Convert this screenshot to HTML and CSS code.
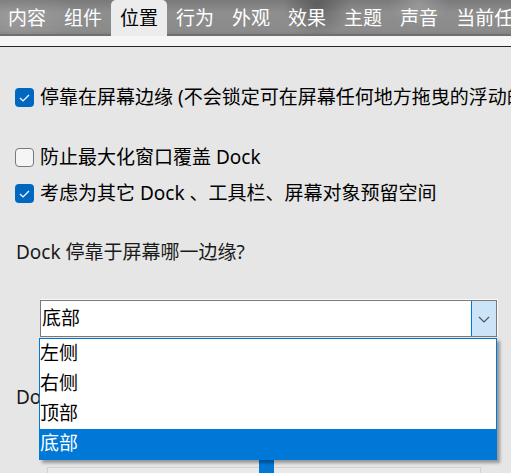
FILE: index.html
```html
<!DOCTYPE html>
<html lang="zh-CN">
<head>
<meta charset="utf-8">
<title>Dock 设置 - 位置</title>
<link rel="stylesheet" href="styles.css">
</head>
<body>
<div class="window">
  <nav class="tabbar">
    <span class="tab">内容</span>
    <span class="tab">组件</span>
    <span class="tab active">位置</span>
    <span class="tab">行为</span>
    <span class="tab">外观</span>
    <span class="tab">效果</span>
    <span class="tab">主题</span>
    <span class="tab">声音</span>
    <span class="tab">当前任务</span>
  </nav>
  <div class="band"></div>
  <main class="content">
    <div class="row r1">
      <span class="cb checked"><svg viewBox="0 0 19 19" width="19" height="19"><path d="M5 10 L8 13 L14 7" fill="none" stroke="#fff" stroke-width="1.2"/></svg></span>
      <span class="txt">停靠在屏幕边缘 (不会锁定可在屏幕任何地方拖曳的浮动的面板)</span>
    </div>
    <div class="row r2">
      <span class="cb"></span>
      <span class="txt">防止最大化窗口覆盖 Dock</span>
    </div>
    <div class="row r3">
      <span class="cb checked"><svg viewBox="0 0 19 19" width="19" height="19"><path d="M5 10 L8 13 L14 7" fill="none" stroke="#fff" stroke-width="1.2"/></svg></span>
      <span class="txt">考虑为其它 Dock 、工具栏、屏幕对象预留空间</span>
    </div>
    <div class="label l1">Dock 停靠于屏幕哪一边缘?</div>
    <div class="combo-wrap">
      <div class="combo">
        <span class="value">底部</span>
        <span class="btn"><svg viewBox="0 0 24 35" width="24" height="35"><path d="M7 16 L12 21 L17 16" fill="none" stroke="#555" stroke-width="1.2"/></svg></span>
      </div>
      <ul class="list">
        <li>左侧</li>
        <li>右侧</li>
        <li>顶部</li>
        <li class="sel">底部</li>
      </ul>
    </div>
    <div class="label l2">Dock 与屏幕边缘的距离</div>
    <div class="slider">
      <div class="track"></div>
      <div class="thumb"></div>
    </div>
  </main>
</div>
</body>
</html>
```

FILE: styles.css
```css
html, body {
  margin: 0;
  padding: 0;
}
body {
  background: #e6e6e6;
  font-family: "Noto Sans", "Noto Sans CJK SC", sans-serif;
  font-size: 19px;
  color: #000;
  width: 511px;
  height: 473px;
  overflow: hidden;
}
.window {
  width: 511px;
  height: 473px;
  overflow: hidden;
}
.tabbar {
  height: 36px;
  display: flex;
  white-space: nowrap;
  overflow: hidden;
  margin-left: -1px;
  box-shadow: inset 0 -2px #6f6f6f;
  background:
    radial-gradient(ellipse 34px 32px at 318px 6px, rgba(50,50,50,.45), rgba(50,50,50,0)),
    radial-gradient(ellipse 30px 26px at 420px 2px, rgba(255,255,255,.18), rgba(255,255,255,0)),
    radial-gradient(ellipse 60px 30px at 20px 18px, rgba(255,255,255,.12), rgba(255,255,255,0)),
    linear-gradient(#7a7a7a, #8e8e8e 35%, #8b8b8b 85%, #7c7c7c);
}
.tab {
  flex: none;
  padding: 0 9px;
  line-height: 36px;
  color: #fff;
}
.tab.active {
  color: #000;
  background: #ececec;
  border-radius: 5px 5px 0 0;
}
.band {
  height: 10px;
  background: #f6f6f6;
  border-bottom: 1px solid #262626;
}
.content {
  padding: 37px 0 0 15px;
}
.row {
  display: flex;
  align-items: center;
  gap: 6px;
  height: 27px;
  white-space: nowrap;
}
.r2 { margin-top: 33px; }
.r3 { margin-top: 9px; }
.txt {
  line-height: 27px;
}
.cb {
  flex: none;
  width: 19px;
  height: 19px;
  box-sizing: border-box;
  border-radius: 4px;
  background: #f5f5f5;
  border: 1px solid #7a7a7a;
}
.cb svg { display: block; }
.cb.checked {
  background: #0067c0;
  border: none;
}
.label {
  height: 27px;
  line-height: 27px;
  padding-left: 1px;
  color: #1a1a1a;
  white-space: nowrap;
}
.l1 { margin-top: 32px; }
.l2 { margin-top: 47px; }
.combo-wrap {
  position: relative;
  margin: 34px 0 0 25px;
  width: 457px;
}
.combo {
  height: 37px;
  box-sizing: border-box;
  border: 1px solid #7a7a7a;
  background: #fff;
  display: flex;
  box-shadow: 1px -1px 0 #fafafa;
}
.value {
  flex: 1;
  padding-left: 1px;
  line-height: 35px;
}
.btn {
  width: 24px;
  border-left: 1px solid #0078d7;
  background: #cce4f7;
}
.btn svg { display: block; }
.list {
  position: absolute;
  z-index: 2;
  top: 38px;
  left: -1px;
  width: 458px;
  margin: 0;
  padding: 0;
  list-style: none;
  box-sizing: border-box;
  border: 1px solid #0078d7;
  background: #fff;
  box-shadow: 3px 3px 3px rgba(0,0,0,.35);
}
.list li {
  height: 30px;
  line-height: 28px;
}
.list li.sel {
  background: #0078d7;
  color: #fff;
}
.slider {
  position: relative;
  margin: 48px 0 0 32px;
  width: 434px;
  height: 30px;
}
.track {
  position: relative;
  top: 8px;
  height: 10px;
  box-sizing: border-box;
  border: 1px solid #d2d2d2;
  background: #e9e9e9;
}
.thumb {
  position: absolute;
  top: 0;
  left: 212px;
  width: 15px;
  height: 24px;
  background: #0078d7;
}
```
